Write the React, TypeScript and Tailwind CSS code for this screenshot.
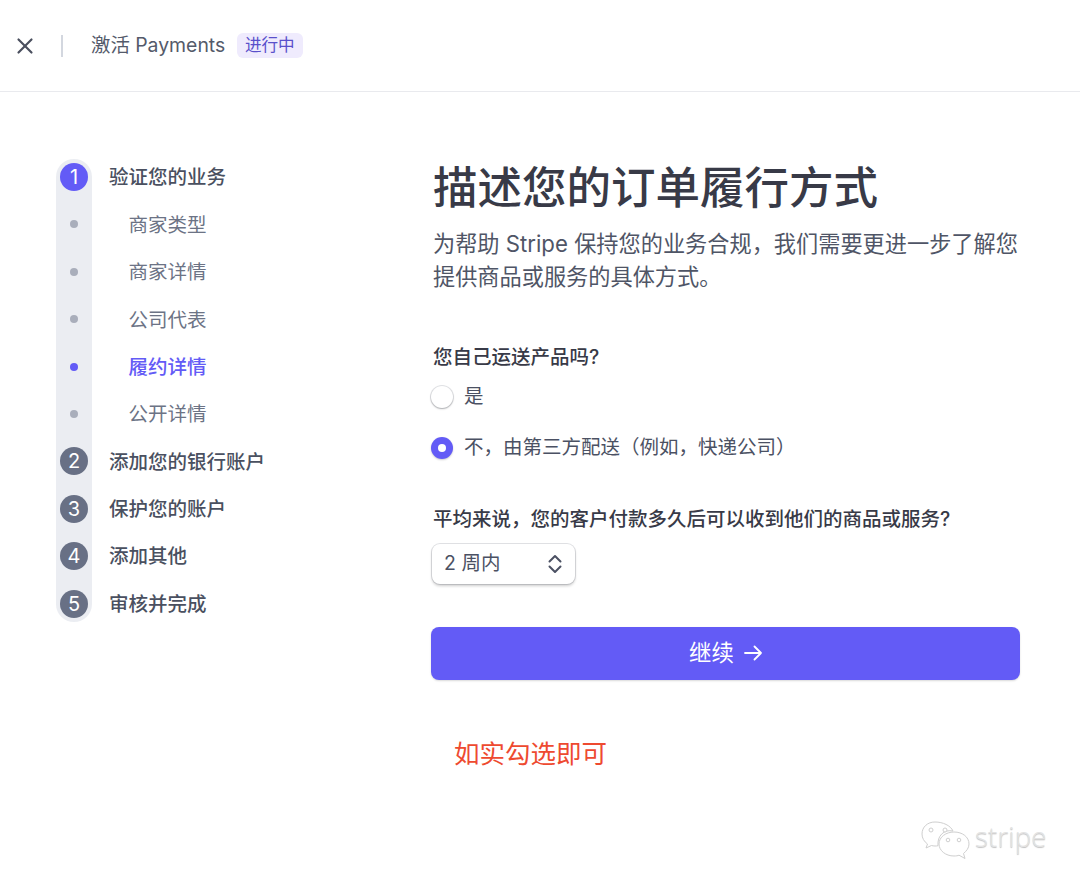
import React from "react";
import { X } from "lucide-react";

const steps: { kind: "num" | "dot"; n?: number; label: string; state?: "active" }[] = [
  { kind: "num", n: 1, label: "验证您的业务", state: "active" },
  { kind: "dot", label: "商家类型" },
  { kind: "dot", label: "商家详情" },
  { kind: "dot", label: "公司代表" },
  { kind: "dot", label: "履约详情", state: "active" },
  { kind: "dot", label: "公开详情" },
  { kind: "num", n: 2, label: "添加您的银行账户" },
  { kind: "num", n: 3, label: "保护您的账户" },
  { kind: "num", n: 4, label: "添加其他" },
  { kind: "num", n: 5, label: "审核并完成" },
];

function StepRow({ s }: { s: (typeof steps)[number] }) {
  const active = s.state === "active";
  return (
    <div className="flex h-[47.4px] items-center">
      <div className="flex w-[28px] shrink-0 justify-center">
        {s.kind === "num" ? (
          <div
            className={
              "flex h-[28px] w-[28px] items-center justify-center rounded-full text-[20px] text-white " +
              (active ? "bg-[#635bf6]" : "bg-[#687085]")
            }
          >
            {s.n}
          </div>
        ) : (
          <div className={"h-[8px] w-[8px] rounded-full " + (active ? "bg-[#635bf6]" : "bg-[#a9aebb]")} />
        )}
      </div>
      {s.kind === "num" ? (
        <span className="ml-[21px] pt-[2px] text-[19.5px] font-medium whitespace-nowrap text-[#4a5060]">{s.label}</span>
      ) : (
        <span
          className={
            "ml-[40.500px] pt-[2px] text-[19.5px] whitespace-nowrap " + (active ? "font-medium text-[#635bf6]" : "text-[#6c7385]")
          }
        >
          {s.label}
        </span>
      )}
    </div>
  );
}

function Radio({ checked, label }: { checked?: boolean; label: string }) {
  return (
    <div className="flex items-center">
      {checked ? (
        <div className="ml-[-2px] flex h-[22px] w-[22px] items-center justify-center rounded-full bg-[#635bf6] shadow-[0_1px_2px_rgba(0,0,0,0.2)]">
          <div className="h-[8px] w-[8px] rounded-full bg-white" />
        </div>
      ) : (
        <div className="ml-[-2px] h-[22px] w-[22px] rounded-full bg-white shadow-[0_0_0_1px_rgba(60,66,87,0.14),0_1px_2px_rgba(0,0,0,0.25)]" />
      )}
      <span className="ml-[11px] text-[19.5px] whitespace-nowrap text-[#4b5163]">{label}</span>
    </div>
  );
}

export default function App() {
  return (
    <div className="relative h-[890px] w-[1080px] overflow-hidden bg-white font-['Inter','Noto_Sans_CJK_SC',sans-serif]">
      <header className="flex h-[92px] items-center border-b border-[#e9eaee] pl-[12px]">
        <X className="h-[26px] w-[26px] text-[#4a4f5e]" strokeWidth={2} />
        <div className="ml-[23px] h-[22px] w-[2px] bg-[#d3d7df]" />
        <span className="ml-[28px] text-[19.4px] whitespace-nowrap text-[#545a6a]">激活 Payments</span>
        <span className="ml-[11.500px] flex h-[25px] w-[66px] items-center justify-center rounded-[6px] bg-[#efebfd] text-[16.6px] text-[#5a50cb]">
          进行中
        </span>
      </header>

      <main className="flex pl-[56px]">
        <div className="relative mt-[61.300px] w-[375px] shrink-0">
          <div className="absolute top-[5.700px] left-0 h-[463px] w-[36px] rounded-full bg-[#ebedf2]" />
          <div className="relative pl-[4px]">
            {steps.map((s) => (
              <StepRow key={s.label} s={s} />
            ))}
          </div>
        </div>

        <div className="w-[589px] pt-[61px]">
          <h1 className="pl-[2px] text-[44.5px] leading-[70px] font-medium whitespace-nowrap text-[#383a47]">
            描述您的订单履行方式
          </h1>
          <p className="mt-[4px] w-[600px] pl-[2px] text-[22.2px] leading-[33px] text-[#4f5566]">
            为帮助 Stripe 保持您的业务合规，我们需要更进一步了解您
            <br />
            提供商品或服务的具体方式。
          </p>

          <div className="mt-[49px] pl-[2px] text-[19.5px] leading-[30px] font-medium text-[#383a47]">您自己运送产品吗?</div>
          <div className="mt-[10px] flex flex-col gap-[28px] pl-[2px]">
            <Radio label="是" />
            <div className="mt-[-6px]">
              <Radio checked label="不，由第三方配送（例如，快递公司）" />
            </div>
          </div>

          <div className="mt-[41px] pl-[2px] text-[19.5px] leading-[30px] font-medium text-[#383a47]">
            平均来说，您的客户付款多久后可以收到他们的商品或服务?
          </div>
          <div className="mt-[10px] ml-[1px] flex h-[40px] w-[143px] items-center justify-between rounded-[8px] bg-white pr-[13px] pl-[12px] text-[19.5px] text-[#4b5163] shadow-[0_0_0_1px_rgba(60,66,87,0.16),0_2px_3px_rgba(0,0,0,0.2)]">
            <span>2 周内</span>
            <svg width="14" height="20" viewBox="0 0 14 20" fill="none" stroke="#4b5163" strokeWidth="2" strokeLinecap="round" strokeLinejoin="round">
              <path d="M1.500 7.500 7 2l5.500 5.500" />
              <path d="M1.500 12.500 7 18l5.500-5.500" />
            </svg>
          </div>

          <button className="mt-[43px] flex h-[53px] w-[589px] items-center justify-center rounded-[8px] bg-[#635bf6] text-[22.4px] text-white shadow-[0_1px_2px_rgba(0,0,0,0.15)]">
            继续
            <svg className="ml-[10px]" width="18" height="16" viewBox="0 0 18 16" fill="none" stroke="currentColor" strokeWidth="1.8" strokeLinecap="round" strokeLinejoin="round">
              <path d="M1 8h16M10.500 1.500 17 8l-6.500 6.500" />
            </svg>
          </button>

          <div className="mt-[56px] ml-[23px] text-[25.5px] leading-[36px] text-[#ee4a30]">如实勾选即可</div>
        </div>
      </main>

      <div className="absolute top-[821px] left-[921px] flex items-start">
        <svg width="50" height="40" viewBox="0 0 50 40" fill="#ffffff" stroke="#cfcfcf" strokeWidth="1">
          <path d="M14 1C6.500 1 1 6 1 13c0 4 2 7.500 5.500 10L5 27l5.500-2.500c1 .3 2 .5 3.500.5 1 0 2 0 3-.3C16 15 23 8 32 10 29.500 4.500 22 1 14 1z" />
          <circle cx="10" cy="9" r="2" />
          <circle cx="24" cy="9" r="2" />
          <path d="M33 11c-8 0-15 5-15 12 0 6.500 6.500 12 15 12 2 0 4-.3 5-.8l6 3.300-1.500-5C45.500 30 48 27 48 23c0-7-6.500-12-15-12z" />
          <circle cx="27" cy="19" r="1.800" />
          <circle cx="38" cy="19" r="1.800" />
        </svg>
        <span className="mt-[2px] ml-[4px] text-[27.5px] leading-[28px] font-light tracking-[0.2px] text-[#e3e3e3] [text-shadow:0_1px_1px_rgba(0,0,0,0.25)] font-['Open_Sans',sans-serif]">
          stripe
        </span>
      </div>
    </div>
  );
}
